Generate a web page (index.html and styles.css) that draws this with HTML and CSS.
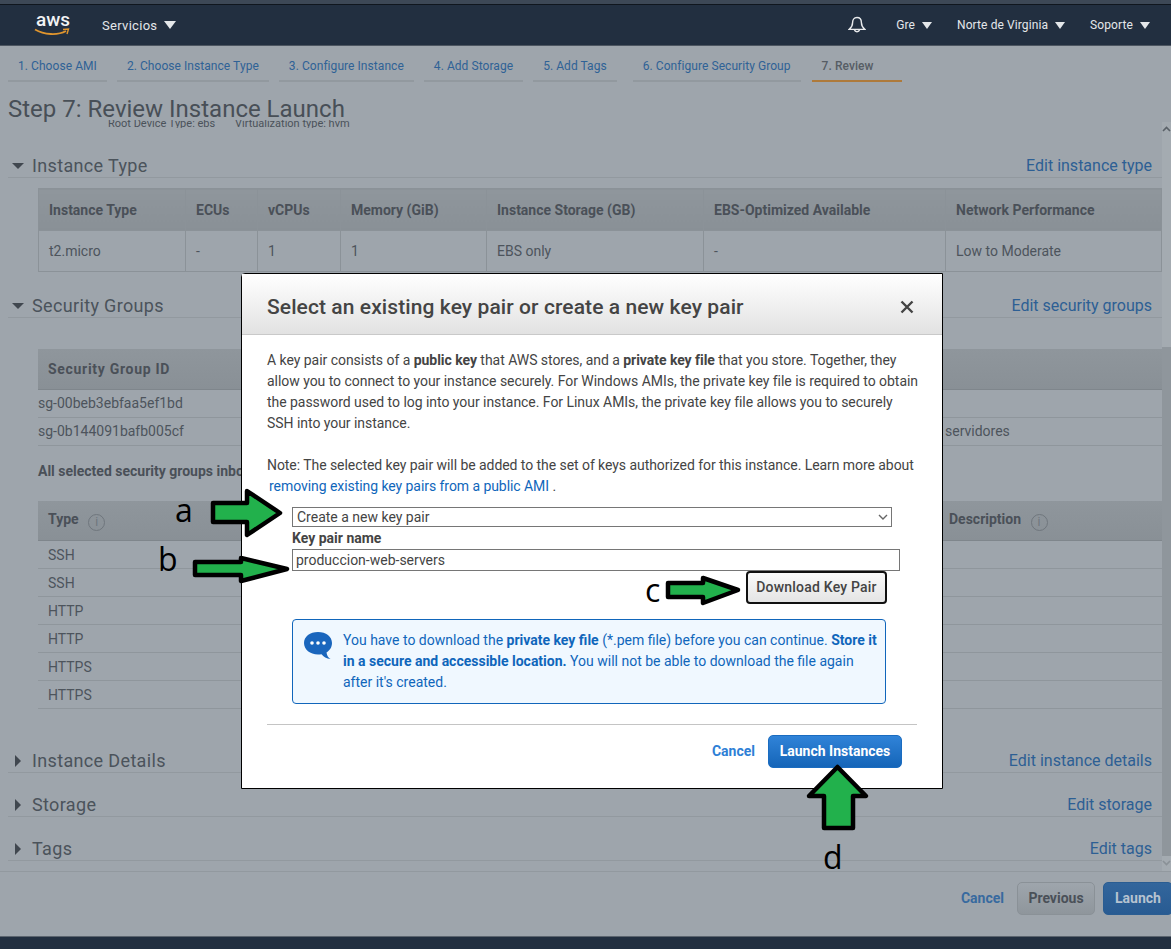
FILE: index.html
```html
<!DOCTYPE html>
<html lang="en">
<head>
    <meta charset="UTF-8">
    <title>Step 7: Review Instance Launch</title>
    <link rel="stylesheet" href="styles.css">
</head>
<body>
    <div class="page">
        <div class="top-strip"></div>
        <nav class="navbar">
            <svg class="aws-logo" width="40" height="24" viewBox="0 0 40 24">
                <text x="2" y="13" class="aws-text">aws</text>
                <path d="M1 16.5 C10 22 24 22.5 32 18" fill="none" stroke="#e0952d" stroke-width="1.8"/>
                <path d="M29 16.5 L34.5 16 L33 21" fill="none" stroke="#e0952d" stroke-width="1.4"/>
            </svg>
            <span class="nav-item services">Servicios <i class="caret"></i></span>
            <div class="nav-right">
                <svg class="bell" width="18" height="18" viewBox="0 0 18 18">
                    <path d="M9 1.5 C5.8 1.5 4.6 4 4.6 6.6 C4.6 9.8 3.4 11.6 1.2 13.4 L16.8 13.4 C14.6 11.6 13.4 9.8 13.4 6.6 C13.4 4 12.2 1.5 9 1.5 Z" fill="none" stroke="#e8eaec" stroke-width="1.4"/>
                    <path d="M6.4 13.8 A2.7 2.7 0 0 0 11.6 13.8" fill="none" stroke="#e8eaec" stroke-width="1.4"/>
                </svg>
                <span class="nav-item gre">Gre <i class="caret"></i></span>
                <span class="nav-item region">Norte de Virginia <i class="caret"></i></span>
                <span class="nav-item">Soporte <i class="caret"></i></span>
            </div>
        </nav>

        <div class="tabs">
            <a class="tab">1. Choose AMI</a>
            <a class="tab">2. Choose Instance Type</a>
            <a class="tab">3. Configure Instance</a>
            <a class="tab">4. Add Storage</a>
            <a class="tab">5. Add Tags</a>
            <a class="tab security">6. Configure Security Group</a>
            <a class="tab active">7. Review</a>
        </div>

        <h1 class="page-title">Step 7: Review Instance Launch</h1>

        <div class="review">
            <div class="review-content">
                <div class="root-line">Root Device Type: ebs <span class="virt">Virtualization type: hvm</span></div>

                <div class="section-head first">
                    <i class="tri-down"></i><span class="section-name">Instance Type</span>
                    <a class="edit-link">Edit instance type</a>
                </div>
                <table class="data-table type-table">
                    <tr>
                        <th class="col-type">Instance Type</th>
                        <th class="col-ecu">ECUs</th>
                        <th class="col-vcpu">vCPUs</th>
                        <th class="col-mem">Memory (GiB)</th>
                        <th class="col-store">Instance Storage (GB)</th>
                        <th class="col-ebs">EBS-Optimized Available</th>
                        <th>Network Performance</th>
                    </tr>
                    <tr>
                        <td>t2.micro</td>
                        <td>-</td>
                        <td>1</td>
                        <td>1</td>
                        <td>EBS only</td>
                        <td>-</td>
                        <td>Low to Moderate</td>
                    </tr>
                </table>

                <div class="section-head groups">
                    <i class="tri-down"></i><span class="section-name">Security Groups</span>
                    <a class="edit-link">Edit security groups</a>
                </div>
                <table class="data-table plain-table sg-table">
                    <tr><th>Security Group ID</th><th></th></tr>
                    <tr><td class="flush">sg-00beb3ebfaa5ef1bd</td><td></td></tr>
                    <tr><td class="flush">sg-0b144091bafb005cf</td><td class="sg-desc">servidores</td></tr>
                </table>
                <div class="inbound-note">All selected security groups inbound rules</div>
                <table class="data-table plain-table rules-table">
                    <tr><th>Type <i class="info">i</i></th><th>Description <i class="info">i</i></th></tr>
                    <tr><td>SSH</td><td></td></tr>
                    <tr><td>SSH</td><td></td></tr>
                    <tr><td>HTTP</td><td></td></tr>
                    <tr><td>HTTP</td><td></td></tr>
                    <tr><td>HTTPS</td><td></td></tr>
                    <tr><td>HTTPS</td><td></td></tr>
                </table>

                <div class="section-head details">
                    <i class="tri-right"></i><span class="section-name">Instance Details</span>
                    <a class="edit-link">Edit instance details</a>
                </div>
                <div class="section-head collapsed">
                    <i class="tri-right"></i><span class="section-name">Storage</span>
                    <a class="edit-link">Edit storage</a>
                </div>
                <div class="section-head collapsed">
                    <i class="tri-right"></i><span class="section-name">Tags</span>
                    <a class="edit-link">Edit tags</a>
                </div>
            </div>
            <div class="scrollbar">
                <svg class="scroll-up" width="9" height="8" viewBox="0 0 9 8"><path d="M1 6 L4.5 2.5 L8 6" fill="none" stroke="#5a6168" stroke-width="1.6"/></svg>
                <div class="scroll-thumb"></div>
                <svg class="scroll-down" width="9" height="8" viewBox="0 0 9 8"><path d="M1 2 L4.5 5.5 L8 2" fill="none" stroke="#8a9197" stroke-width="1.6"/></svg>
            </div>
        </div>

        <div class="wizard-footer">
            <a class="footer-cancel">Cancel</a>
            <button class="btn-previous">Previous</button>
            <button class="btn-launch">Launch</button>
        </div>
        <div class="bottom-bar"></div>
    </div>

    <div class="modal">
        <div class="modal-head">
            <h2>Select an existing key pair or create a new key pair</h2>
            <svg class="modal-close" width="14" height="14" viewBox="0 0 14 14"><path d="M1.5 1.5 L12.5 12.5 M12.5 1.5 L1.5 12.5" stroke="#444" stroke-width="2.4"/></svg>
        </div>
        <div class="modal-body">
            <p class="intro">A key pair consists of a <b>public key</b> that AWS stores, and a <b>private key file</b> that you store. Together, they allow you to connect to your instance securely. For Windows AMIs, the private key file is required to obtain the password used to log into your instance. For Linux AMIs, the private key file allows you to securely SSH into your instance.</p>
            <p class="note">Note: The selected key pair will be added to the set of keys authorized for this instance. Learn more about <a class="note-link">removing existing key pairs from a public AMI</a> .</p>

            <div class="key-form">
                <div class="select-wrap">
                    <select class="key-select">
                        <option>Create a new key pair</option>
                    </select>
                    <svg class="select-chevron" width="10" height="6" viewBox="0 0 10 6"><path d="M1 1 L5 5 L9 1" fill="none" stroke="#666" stroke-width="1.4"/></svg>
                </div>
                <label class="key-label" for="keyName">Key pair name</label>
                <input class="key-input" type="text" id="keyName" value="produccion-web-servers">
                <div class="download-row">
                    <button class="btn-download">Download Key Pair</button>
                </div>
                <div class="info-box">
                    <svg class="chat-icon" width="30" height="29" viewBox="0 0 30 29">
                        <path d="M15 1 C23 1 29 5.500 29 12 C29 16.500 26.500 19.500 23.500 21.500 C23.800 24 25 26.500 27.500 28 C23.500 27.500 20.500 26 18.500 23.200 C17.400 23.300 16.200 23.400 15 23.400 C7 23.400 1 18.500 1 12 C1 5.500 7 1 15 1 Z" fill="#1a66bd"/>
                        <circle cx="9" cy="12" r="1.800" fill="#fff"/>
                        <circle cx="15" cy="12" r="1.800" fill="#fff"/>
                        <circle cx="21" cy="12" r="1.800" fill="#fff"/>
                    </svg>
                    <p>You have to download the <b>private key file</b> (*.pem file) before you can continue. <b>Store it in a secure and accessible location.</b> You will not be able to download the file again after it's created.</p>
                </div>
            </div>

            <div class="modal-actions">
                <a class="modal-cancel">Cancel</a>
                <button class="btn-instances">Launch Instances</button>
            </div>
        </div>
    </div>

    <!-- green arrows and letters someone drew on top of the screenshot -->
    <svg class="annotations" width="1171" height="949" viewBox="0 0 1171 949">
        <polygon class="arrow" points="213,503 247,503 247,491 280,513 247,535 247,522 213,522"/>
        <polygon class="arrow" points="195,562 241,562 241,558 287,569 241,581 241,575 195,575"/>
        <polygon class="arrow" points="668,583 703,583 703,578 738,590 703,603 703,597 668,597"/>
        <polygon class="arrow" points="837.5,767 866,796 853,796 853,828 824,828 824,796 809,796"/>
        <text class="letter" x="175" y="522">a</text>
        <text class="letter" x="158" y="571">b</text>
        <text class="letter" x="645" y="602">c</text>
        <text class="letter" x="823" y="869">d</text>
    </svg>
</body>
</html>
```

FILE: styles.css
```css
* {
    box-sizing: border-box;
}
body {
    margin: 0;
    font-family: Roboto, "Liberation Sans", sans-serif;
    overflow: hidden;
}
.page {
    display: flex;
    flex-direction: column;
    height: 949px;
    background-color: #9ea5ac;
    color: #4b525a;
    overflow: hidden;
}
.top-strip {
    height: 5px;
    background-color: #3d4856;
    border-bottom: 1px solid #10161e;
}
.navbar {
    display: flex;
    align-items: center;
    height: 41px;
    background-color: #222f40;
    border-bottom: 1px solid #4d5661;
    color: #e4e7ea;
}
.aws-logo {
    margin-left: 34px;
}
.aws-text {
    font-size: 19px;
    font-weight: 500;
    fill: #f2f3f4;
}
.nav-item {
    display: flex;
    align-items: center;
    gap: 7px;
    font-size: 12px;
    letter-spacing: 0.1px;
}
.services {
    margin-left: 28px;
    font-size: 13px;
    letter-spacing: 0.3px;
}
.nav-right {
    display: flex;
    align-items: center;
    margin-left: auto;
    margin-right: 21px;
}
.bell {
    margin-right: 30px;
}
.gre {
    margin-right: 25px;
}
.region {
    margin-right: 25px;
}
.caret {
    width: 0;
    height: 0;
    border-left: 5px solid transparent;
    border-right: 5px solid transparent;
    border-top: 7px solid #e4e7ea;
}
.services .caret {
    border-left-width: 6px;
    border-right-width: 6px;
    border-top-width: 8px;
}

.tabs {
    display: flex;
    gap: 10px;
    height: 37px;
    padding-left: 8px;
}
.tab {
    height: 36px;
    padding: 13px 10px 0;
    font-size: 12px;
    letter-spacing: 0.06px;
    color: #2f6296;
    border-bottom: 2px solid #92999f;
}
.tab.security {
    margin-left: 6px;
}
.tab.active {
    width: 90px;
    margin-left: 1px;
    color: #565d65;
    font-weight: 500;
    border-bottom-color: #ae7a3b;
}

.page-title {
    height: 35px;
    margin: 0;
    padding: 12px 0 0 8px;
    font-size: 24px;
    line-height: 28px;
    font-weight: 400;
    color: #484f57;
}

.review {
    display: flex;
    height: 753px;
}
.review-content {
    flex: 1;
    padding-left: 8px;
    overflow: hidden;
}
.root-line {
    height: 8px;
    margin-top: 2px;
    padding-left: 100px;
    font-size: 11px;
    line-height: 7px;
    overflow: hidden;
    color: #4b525a;
}
.virt {
    margin-left: 17px;
}
.section-head {
    display: flex;
    align-items: center;
    height: 24px;
    border-bottom: 1px solid #92999f;
}
.section-head.first {
    margin-top: 26px;
}
.section-head.groups {
    margin-top: 22px;
}
.section-head.details {
    margin-top: 40px;
}
.section-head.collapsed {
    margin-top: 20px;
}
.section-name {
    font-size: 18px;
    letter-spacing: 0.35px;
    color: #4b535b;
}
.tri-down {
    width: 0;
    height: 0;
    margin: 0 8px 0 4px;
    border-left: 6px solid transparent;
    border-right: 6px solid transparent;
    border-top: 6px solid #40474f;
}
.tri-right {
    width: 0;
    height: 0;
    margin: 0 11px 0 7px;
    border-top: 6px solid transparent;
    border-bottom: 6px solid transparent;
    border-left: 6px solid #40474f;
}
.edit-link {
    margin-left: auto;
    margin-right: 10px;
    font-size: 16px;
    color: #2d5f94;
}

.data-table {
    width: 1124px;
    margin-left: 30px;
    border-collapse: collapse;
    table-layout: fixed;
    font-size: 14px;
    color: #4d545c;
}
.data-table th {
    height: 42px;
    padding: 0 10px;
    text-align: left;
    font-weight: 700;
    font-size: 14px;
    color: #4a5058;
    background: linear-gradient(#8f969c, #899096);
    border-bottom: 1px solid #7f868c;
}
.data-table td {
    padding: 0 10px;
}
.type-table {
    margin-top: 10px;
}
.type-table th,
.type-table td {
    border: 1px solid #8b9298;
}
.type-table td {
    height: 41px;
}
.col-type {
    width: 147px;
}
.col-ecu {
    width: 72px;
}
.col-vcpu {
    width: 83px;
}
.col-mem {
    width: 146px;
}
.col-store {
    width: 217px;
}
.col-ebs {
    width: 242px;
}
.plain-table td {
    height: 28px;
    border-bottom: 1px solid #8f969c;
}
.sg-table {
    margin-top: 31px;
}
.sg-table th {
    height: 40px;
    letter-spacing: 0.7px;
}
.sg-table th:first-child,
.rules-table th:first-child {
    width: 901px;
}
.data-table td.flush {
    padding-left: 0;
}
.data-table td.sg-desc {
    padding-left: 6px;
}
.inbound-note {
    height: 55px;
    margin-left: 30px;
    padding-top: 16px;
    font-size: 14px;
    font-weight: 700;
    line-height: 18px;
    color: #4a5058;
}
.rules-table th {
    height: 40px;
    padding-top: 1px;
}
.info {
    display: inline-block;
    width: 17px;
    height: 17px;
    margin-left: 6px;
    border: 1px solid #6f767d;
    border-radius: 50%;
    font-size: 12px;
    font-style: normal;
    font-weight: 400;
    line-height: 15px;
    text-align: center;
    vertical-align: -2px;
    color: #6f767d;
}

.scrollbar {
    display: flex;
    flex-direction: column;
    width: 9px;
    margin-top: 4px;
    background-color: #a4abb1;
}
.scroll-up {
    margin-top: 3px;
}
.scroll-thumb {
    height: 509px;
    margin-top: 214px;
    background-color: #8f969c;
}
.scroll-down {
    margin-top: 3px;
}

.wizard-footer {
    display: flex;
    align-items: center;
    justify-content: flex-end;
    height: 65px;
    padding: 0 0 12px 0;
    border-top: 1px solid #92999f;
}
.footer-cancel {
    margin-right: 13px;
    font-size: 14px;
    font-weight: 700;
    color: #386a9f;
}
.btn-previous,
.btn-launch {
    height: 33px;
    border-radius: 5px;
    font-family: inherit;
    font-size: 14px;
    font-weight: 700;
}
.btn-previous {
    width: 78px;
    margin-right: 8px;
    border: 1px solid #8a9197;
    background: linear-gradient(#9ea5ac, #8f969c);
    color: #4a5058;
}
.btn-launch {
    width: 70px;
    margin-right: -2px;
    border: 1px solid #2a5d92;
    background: linear-gradient(#33669c, #285b92);
    color: #b6c3d0;
}
.bottom-bar {
    height: 13px;
    background-color: #222f40;
    border-top: 1px solid #5b646e;
}

.modal {
    position: absolute;
    left: 241px;
    top: 273px;
    width: 702px;
    height: 516px;
    background: white;
    border: 1px solid black;
    border-radius: 4px 0 0 0;
    color: #444;
}
.modal-head {
    display: flex;
    align-items: center;
    justify-content: space-between;
    height: 61px;
    padding: 5px 28px 0 25px;
    background: linear-gradient(#fff, #e2e2e2);
    border-bottom: 1px solid #c9c9c9;
}
.modal-head h2 {
    margin: 0;
    font-size: 21px;
    letter-spacing: 0.09px;
    font-weight: 500;
    color: #444;
}
.modal-body {
    padding: 15px 25px 0;
    font-size: 14px;
    line-height: 21px;
}
.modal-body p {
    margin: 0;
}
.modal-body .intro {
    height: 105px;
    margin-right: -2px;
    letter-spacing: -0.04px;
}
.note-link {
    color: #0f66bb;
    margin-left: 2px;
}
.modal-body .note {
    height: 42px;
    margin-right: -6px;
    letter-spacing: -0.06px;
}
.key-form {
    display: flex;
    flex-direction: column;
    padding-left: 25px;
    margin-top: 10px;
}
.select-wrap {
    position: relative;
    width: 600px;
    height: 20px;
}
.key-select {
    display: block;
    width: 600px;
    height: 20px;
    padding: 0 0 0 4px;
    appearance: none;
    font-family: inherit;
    font-size: 14px;
    color: #444;
    background: white;
    border: 1px solid #767676;
    border-radius: 0;
}
.select-chevron {
    position: absolute;
    right: 4px;
    top: 7px;
}
.key-label {
    height: 22px;
    line-height: 22px;
    font-weight: 700;
}
.key-input {
    width: 608px;
    height: 22px;
    padding: 0 3px;
    font-family: inherit;
    font-size: 14px;
    color: #444;
    border: 1px solid #767676;
    border-radius: 0;
}
.download-row {
    display: flex;
    justify-content: flex-end;
    width: 595px;
    height: 48px;
}
.btn-download {
    width: 141px;
    height: 33px;
    padding-bottom: 2px;
    font-family: inherit;
    font-size: 14px;
    font-weight: 500;
    letter-spacing: 0.2px;
    color: #444;
    background: linear-gradient(#fafafa, #e4e4e4);
    border: 2px solid #111;
    border-radius: 4px;
}
.info-box {
    display: flex;
    gap: 10px;
    width: 594px;
    height: 85px;
    padding: 10px 6px 0 10px;
    color: #0f66bb;
    background-color: #f0f8ff;
    border: 1px solid #1166bb;
    border-radius: 4px;
}
.chat-icon {
    flex-shrink: 0;
    margin-top: 1px;
}
.modal-actions {
    display: flex;
    align-items: center;
    justify-content: flex-end;
    height: 53px;
    margin-top: 20px;
    border-top: 1px solid #c4c4c4;
}
.modal-cancel {
    margin-right: 13px;
    font-weight: 700;
    color: #2e7fd6;
}
.btn-instances {
    width: 134px;
    height: 33px;
    margin-right: 15px;
    font-family: inherit;
    font-size: 14px;
    font-weight: 700;
    color: white;
    background: linear-gradient(#3083d8, #1565b8);
    border: 1px solid #1a6cc0;
    border-radius: 5px;
}

.annotations {
    position: absolute;
    left: 0;
    top: 0;
    pointer-events: none;
}
.arrow {
    fill: #22b14c;
    stroke: #000;
    stroke-width: 4.5;
    stroke-linejoin: round;
}
.letter {
    font-family: "Open Sans", sans-serif;
    font-size: 32px;
    fill: #000;
}
```
